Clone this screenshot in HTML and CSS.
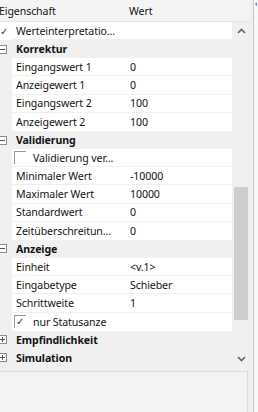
FILE: index.html
```html
<!DOCTYPE html>
<html lang="de">
<head>
<meta charset="utf-8">
<title>Eigenschaften</title>
<link rel="stylesheet" href="styles.css">
</head>
<body>
<div class="app">
  <div class="main">
    <div class="grid">
      <div class="header">
        <div class="h-name">Eigenschaft</div>
        <div class="h-val">Wert</div>
      </div>
      <div class="body">
        <div class="rows">
          <div class="row prop top">
            <div class="gutter"><span class="topcheck">✓</span></div>
            <div class="name">Werteinterpretatio...</div>
            <div class="val"></div>
          </div>
          <div class="row cat"><span class="exp minus"></span><span class="cat-name">Korrektur</span></div>
          <div class="row prop"><div class="gutter"></div><div class="name">Eingangswert 1</div><div class="val">0</div></div>
          <div class="row prop"><div class="gutter"></div><div class="name">Anzeigewert 1</div><div class="val">0</div></div>
          <div class="row prop"><div class="gutter"></div><div class="name">Eingangswert 2</div><div class="val">100</div></div>
          <div class="row prop last"><div class="gutter"></div><div class="name">Anzeigewert 2</div><div class="val">100</div></div>
          <div class="row cat"><span class="exp minus"></span><span class="cat-name">Validierung</span></div>
          <div class="row prop"><div class="gutter"></div><div class="name chk wide"><span class="box"></span><span>Validierung ver...</span></div><div class="val"></div></div>
          <div class="row prop"><div class="gutter"></div><div class="name">Minimaler Wert</div><div class="val">-10000</div></div>
          <div class="row prop"><div class="gutter"></div><div class="name">Maximaler Wert</div><div class="val">10000</div></div>
          <div class="row prop"><div class="gutter"></div><div class="name">Standardwert</div><div class="val">0</div></div>
          <div class="row prop last"><div class="gutter"></div><div class="name">Zeitüberschreitun...</div><div class="val">0</div></div>
          <div class="row cat"><span class="exp minus"></span><span class="cat-name">Anzeige</span></div>
          <div class="row prop"><div class="gutter"></div><div class="name">Einheit</div><div class="val">&lt;v.1&gt;</div></div>
          <div class="row prop"><div class="gutter"></div><div class="name">Eingabetype</div><div class="val">Schieber</div></div>
          <div class="row prop"><div class="gutter"></div><div class="name">Schrittweite</div><div class="val">1</div></div>
          <div class="row prop last"><div class="gutter"></div><div class="name chk"><span class="box"><span class="tick">✓</span></span><span>nur Statusanze</span></div><div class="val"></div></div>
          <div class="row cat"><span class="exp plus"></span><span class="cat-name">Empfindlichkeit</span></div>
          <div class="row cat"><span class="exp plus"></span><span class="cat-name">Simulation</span></div>
        </div>
        <div class="vscroll">
          <div class="arrow">
            <svg width="9" height="6" viewBox="0 0 9 6"><path d="M1 5 L4.5 1.5 L8 5" fill="none" stroke="#606060" stroke-width="1.6"/></svg>
          </div>
          <div class="track"><div class="thumb"></div></div>
          <div class="arrow">
            <svg width="9" height="6" viewBox="0 0 9 6"><path d="M1 1 L4.5 4.5 L8 1" fill="none" stroke="#606060" stroke-width="1.6"/></svg>
          </div>
        </div>
      </div>
    </div>
    <div class="desc"></div>
  </div>
  <div class="side"><span class="side-mark">'</span></div>
</div>
</body>
</html>
```

FILE: styles.css
```css
html, body {
  margin: 0;
  padding: 0;
}
body {
  width: 258px;
  height: 412px;
  overflow: hidden;
  background: #f0f0f0;
  font-family: "Noto Sans", "Open Sans", sans-serif;
  font-size: 10.6px;
  letter-spacing: -0.1px;
  color: #141414;
}
.app {
  display: flex;
  height: 412px;
}
.main {
  width: 253px;
  display: flex;
  flex-direction: column;
}
.grid {
  width: 250px;
  height: 367px;
  display: flex;
  flex-direction: column;
  background: #ffffff;
}
.header {
  height: 21px;
  display: flex;
  align-items: center;
  background: #f4f4f4;
  border-bottom: 1px solid #e3e3e3;
  overflow: hidden;
}
.h-name {
  width: 130px;
  margin-left: -1px;
}
.h-val {
  flex: 1;
}
.body {
  flex: 1;
  display: flex;
  overflow: hidden;
}
.rows {
  width: 232px;
  overflow: hidden;
  background: #f0f0f0;
}
.row {
  height: 18.16px;
  box-sizing: border-box;
  display: flex;
  align-items: center;
  white-space: nowrap;
}
.cat {
  background: #f0f0f0;
  font-weight: bold;
}
.cat-name {
  margin-left: 9px;
}
.exp {
  width: 9px;
  height: 9px;
  box-sizing: border-box;
  border: 1px solid #8c8c8c;
  margin-left: -2px;
  position: relative;
  background: #fff;
  flex: none;
}
.exp::before {
  content: "";
  position: absolute;
  left: 1px;
  top: 3px;
  width: 5px;
  height: 1px;
  background: #555;
}
.plus::after {
  content: "";
  position: absolute;
  left: 3px;
  top: 1px;
  width: 1px;
  height: 5px;
  background: #555;
}
.prop {
  background: #fff;
}
.gutter {
  width: 12px;
  height: 100%;
  background: #f0f0f0;
  flex: none;
  position: relative;
  overflow: hidden;
}
.name, .val {
  height: 100%;
  display: flex;
  align-items: center;
  border-bottom: 1px solid #f0f0f0;
  box-sizing: border-box;
  overflow: hidden;
}
.last .name, .last .val {
  border-bottom: none;
}
.name {
  width: 117px;
  padding-left: 4px;
  flex: none;
}
.val {
  flex: 1;
  padding-left: 1px;
}
.top .gutter {
  background: #fff;
}
.topcheck {
  position: absolute;
  left: 0;
  top: 2px;
  font-size: 10px;
  color: #333;
}
.chk {
  padding-left: 2px;
  gap: 7px;
}
.box {
  width: 12px;
  height: 13px;
  box-sizing: border-box;
  border-top: 1px solid #999;
  border-left: 1px solid #999;
  position: relative;
  flex: none;
}
.tick {
  position: absolute;
  left: 1px;
  top: -2px;
  font-size: 10px;
  color: #333;
}
.vscroll {
  width: 18px;
  display: flex;
  flex-direction: column;
  background: #f0f0f0;
}
.arrow {
  height: 17px;
  display: flex;
  align-items: center;
  justify-content: center;
}
.track {
  flex: 1;
  position: relative;
}
.thumb {
  position: absolute;
  left: 2px;
  right: 2px;
  top: 148px;
  height: 133px;
  background: #cdcdcd;
}
.desc {
  margin-top: 4px;
  flex: 1;
  width: 247px;
  background: #f3f3f3;
  border-top: 1px solid #dadada;
  border-right: 1px solid #dadada;
}
.side {
  flex: 1;
  border-left: 1px solid #c8c8c8;
  position: relative;
  background: #f7f7f7;
}
.side-mark {
  position: absolute;
  left: 1px;
  top: 0;
  font-size: 10px;
}
```
